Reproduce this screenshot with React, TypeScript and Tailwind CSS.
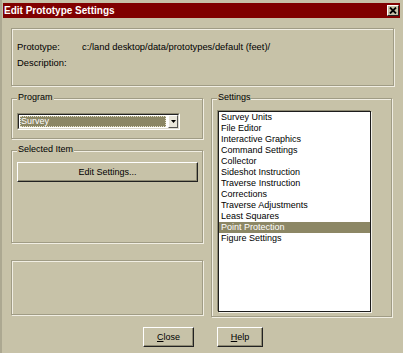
import React from "react";

const items = [
  "Survey Units",
  "File Editor",
  "Interactive Graphics",
  "Command Settings",
  "Collector",
  "Sideshot Instruction",
  "Traverse Instruction",
  "Corrections",
  "Traverse Adjustments",
  "Least Squares",
  "Point Protection",
  "Figure Settings",
];

function Group({
  label,
  className,
  children,
}: {
  label?: string;
  className: string;
  children?: React.ReactNode;
}) {
  return (
    <div
      className={`relative border border-[#a09c85] shadow-[1px_1px_0_#f1eee3,inset_1px_1px_0_#f1eee3] ${className}`}
    >
      {label && (
        <span className="absolute -top-[7px] left-[5px] px-[1px] bg-[#c7c2a8] leading-[11px] text-black">
          {label}
        </span>
      )}
      {children}
    </div>
  );
}

function RaisedButton({
  className,
  children,
}: {
  className: string;
  children: React.ReactNode;
}) {
  return (
    <div
      className={`flex items-center justify-center bg-[#c7c2a8] border border-t-white border-l-white border-r-[#222] border-b-[#222] shadow-[inset_-1px_-1px_0_#8e8a73] text-black leading-[11px] ${className}`}
    >
      {children}
    </div>
  );
}

export default function App() {
  return (
    <div className="w-[403px] h-[353px] bg-[#c7c2a8] overflow-hidden flex flex-col pt-[3px] text-[9px] text-black font-['Liberation_Sans',Arial,sans-serif] shadow-[inset_2px_0_0_#aca891]">
      {/* Title bar */}
      <div className="mx-[3px] h-[15px] bg-[#800000] flex items-center justify-between pl-[1px] pr-[1px]">
        <span className="text-white font-bold text-[10px] leading-[13px]">
          Edit Prototype Settings
        </span>
        <div className="w-[12px] h-[11px] bg-[#c7c2a8] border border-t-white border-l-white border-r-[#222] border-b-[#222] flex items-center justify-center">
          <svg width="8" height="7" viewBox="0 0 8 7">
            <path d="M1 0.5 L7 6.5 M7 0.5 L1 6.5" stroke="#000" strokeWidth="1.8" />
          </svg>
        </div>
      </div>

      <div className="px-[11px] pt-[10px] flex flex-col">
        {/* Top group */}
        <Group className="w-[383px] h-[58px] pt-[10px] pl-[5px] text-[9.4px]">
          <div className="flex leading-[16px]">
            <span className="w-[65px]">Prototype:</span>
            <span>c:/land desktop/data/prototypes/default (feet)/</span>
          </div>
          <div className="flex leading-[16px]">
            <span className="w-[65px]">Description:</span>
          </div>
        </Group>

        <div className="flex gap-[8px] mt-[12px]">
          {/* Left column */}
          <div className="w-[193px] flex flex-col">
            <Group label="Program" className="h-[41px] pt-[14px] pl-[5px]">
              <div className="w-[163px] h-[17px] border border-t-[#8e8a73] border-l-[#8e8a73] border-r-white border-b-white">
                <div className="w-full h-full border border-t-[#222] border-l-[#222] border-r-[#dedbcd] border-b-[#dedbcd] bg-white flex">
                  <div className="flex-1 p-[1px] pr-[2px]">
                    <div className="h-full bg-[#8b8664] text-white leading-[11px] pl-[1px] outline-1 outline-dotted outline-[#e4e0c6] -outline-offset-1">
                      Survey
                    </div>
                  </div>
                  <div className="w-[10px] h-full bg-[#e9e6da] border border-t-white border-l-white border-r-[#555] border-b-[#555] flex items-center justify-center">
                    <svg width="5" height="3" viewBox="0 0 5 3">
                      <path d="M0 0 H5 L2.5 3 Z" fill="#000" />
                    </svg>
                  </div>
                </div>
              </div>
            </Group>

            <Group label="Selected Item" className="mt-[11px] h-[93px] pt-[11px] pl-[5px]">
              <RaisedButton className="w-[181px] h-[20px]">Edit Settings...</RaisedButton>
            </Group>

            <Group className="mt-[17px] h-[55px]" />
          </div>

          {/* Right column */}
          <Group label="Settings" className="w-[182px] h-[219px] pt-[12px] pl-[6px]">
            <div className="w-[153px] h-[201px] bg-white border border-[#1c1c1c] shadow-[-1px_-1px_0_#8e8a73,1px_1px_0_#f4f2ea] flex flex-col">
              {items.map((it) => (
                <div
                  key={it}
                  className={`h-[11px] leading-[11px] pl-[2px] whitespace-nowrap ${
                    it === "Point Protection" ? "bg-[#8c8765] text-white" : "text-black"
                  }`}
                >
                  {it}
                </div>
              ))}
            </div>
          </Group>
        </div>

        {/* Buttons */}
        <div className="flex mt-[10px]">
          <RaisedButton className="ml-[132px] w-[51px] h-[20px]">
            <span>
              <span className="underline">C</span>lose
            </span>
          </RaisedButton>
          <RaisedButton className="ml-[23px] w-[46px] h-[20px]">
            <span>
              <span className="underline">H</span>elp
            </span>
          </RaisedButton>
        </div>
      </div>
    </div>
  );
}
